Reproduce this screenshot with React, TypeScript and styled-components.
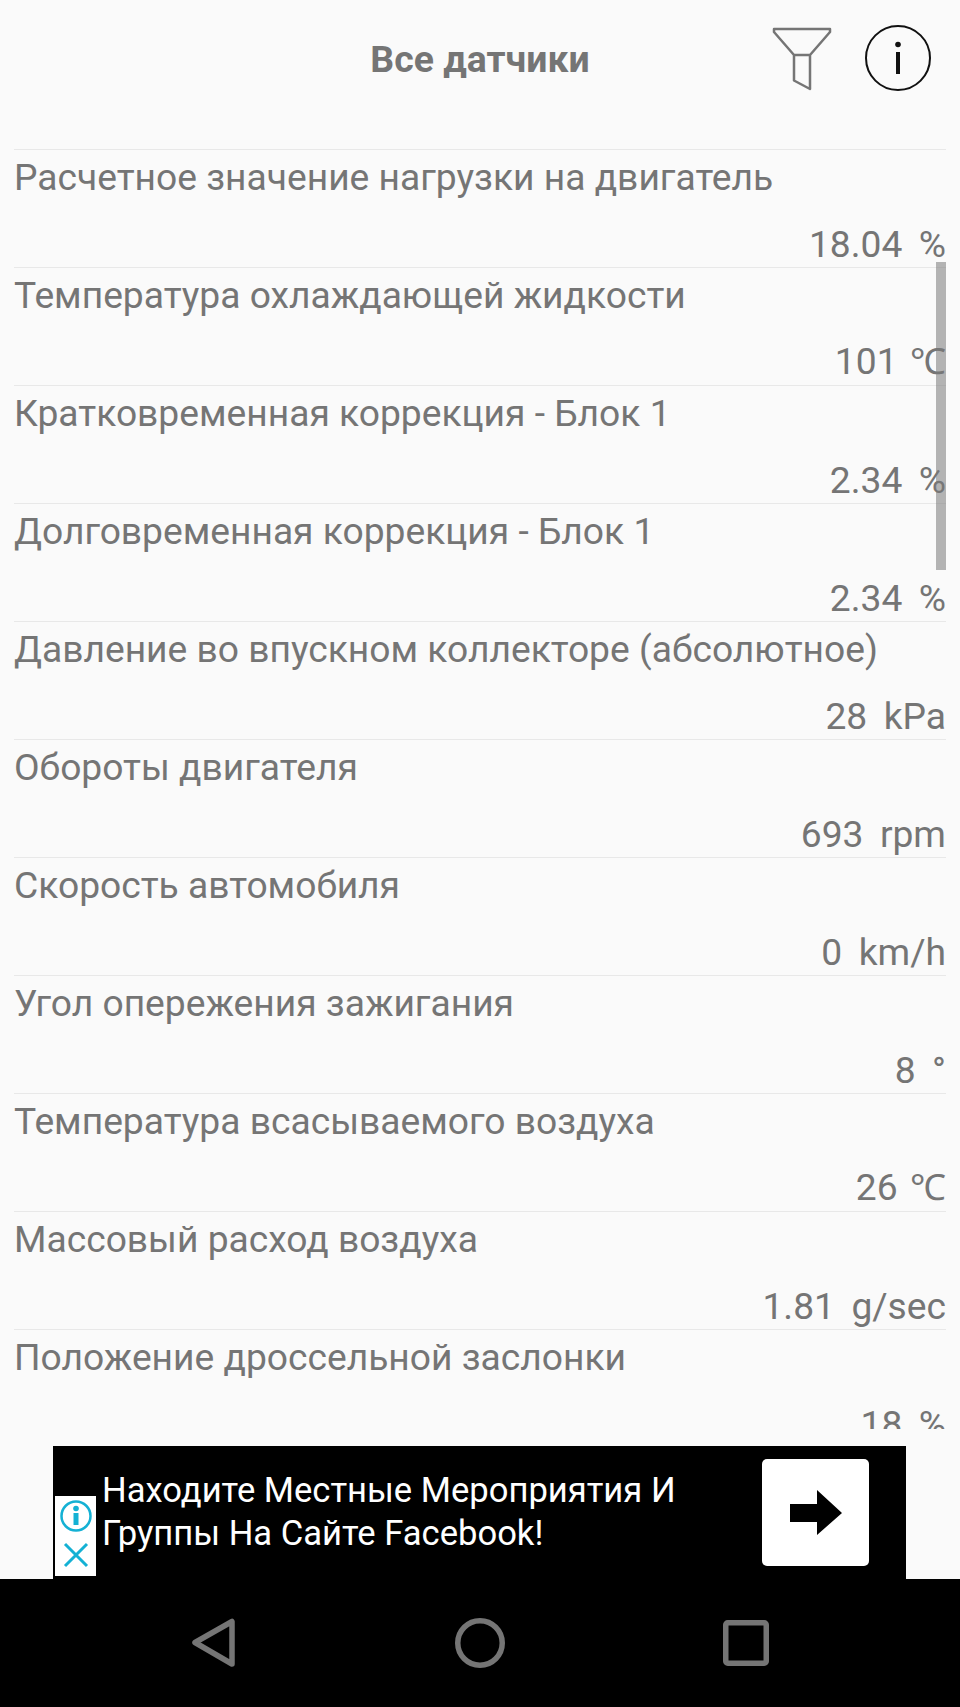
import React from "react";
import styled, { createGlobalStyle } from "styled-components";

const Global = createGlobalStyle`
  html, body { margin: 0; padding: 0; background: #fafafa; }
  #root { width: 960px; height: 1707px; }
`;

const Screen = styled.div`
  width: 960px;
  height: 1707px;
  display: flex;
  flex-direction: column;
  overflow: hidden;
  background: #fafafa;
  font-family: Roboto, "Liberation Sans", sans-serif;
`;

const Header = styled.header`
  height: 149px;
  flex: none;
  position: relative;
  display: flex;
  justify-content: center;
  padding-top: 37px;
  box-sizing: border-box;
`;

const Title = styled.h1`
  margin: 0;
  font-size: 37.400px;
  line-height: 44px;
  font-weight: 700;
  color: #757575;
`;

const HeaderIcons = styled.div`
  position: absolute;
  left: 772px;
  top: 25px;
  display: flex;
  align-items: flex-start;
  gap: 33px;
`;

const ListArea = styled.div`
  position: relative;
  height: 1280px;
  flex: none;
  overflow: hidden;
  padding: 0 14px;
`;

const Row = styled.div`
  height: 118px;
  box-sizing: border-box;
  border-top: 1px solid #e8e8e8;
  display: flex;
  flex-direction: column;
  justify-content: space-between;
  color: #757575;
  font-size: 37.200px;
  line-height: 46px;
`;

const Label = styled.div`
  padding-top: 4px;
  white-space: nowrap;
`;

const Value = styled.div`
  text-align: right;
  white-space: pre;
  word-spacing: -1px;
`;

const Unit = styled.span<{ $compact: boolean }>`
  font-size: ${(p) => (p.$compact ? "36px" : "inherit")};
  margin-left: ${(p) => (p.$compact ? "-4px" : "0")};
`;

const ScrollThumb = styled.div`
  position: absolute;
  left: 936px;
  top: 113px;
  width: 10px;
  height: 308px;
  background: rgba(120, 120, 120, 0.55);
`;

const Spacer = styled.div`
  height: 17px;
  flex: none;
`;

const Ad = styled.div`
  position: relative;
  flex: none;
  height: 133px;
  margin: 0 54px 0 53px;
  background: #000;
  display: flex;
  align-items: center;
  justify-content: space-between;
  padding: 0 37px 0 49px;
`;

const AdText = styled.div`
  color: #fff;
  font-size: 34.600px;
  line-height: 43px;
  margin-top: -1px;
`;

const AdChoices = styled.div`
  position: absolute;
  left: 2px;
  top: 50px;
  width: 41px;
  height: 80px;
  background: #fff;
  display: flex;
  flex-direction: column;
  align-items: center;
  padding-top: 4px;
  box-sizing: border-box;
  gap: 10px;
`;

const AdButton = styled.div`
  width: 107px;
  height: 107px;
  background: #fff;
  border-radius: 5px;
  display: flex;
  align-items: center;
  justify-content: center;
`;

const NavBar = styled.nav`
  flex: 1;
  background: #000;
  display: flex;
  justify-content: center;
  align-items: flex-start;
  padding-top: 39px;
  box-sizing: border-box;
`;

const NavSlot = styled.div`
  width: 266px;
  display: flex;
  justify-content: center;
`;

const rows = [
  ["Расчетное значение нагрузки на двигатель", "18.04", "%"],
  ["Температура охлаждающей жидкости", "101", "℃"],
  ["Кратковременная коррекция - Блок 1", "2.34", "%"],
  ["Долговременная коррекция - Блок 1", "2.34", "%"],
  ["Давление во впускном коллекторе (абсолютное)", "28", "kPa"],
  ["Обороты двигателя", "693", "rpm"],
  ["Скорость автомобиля", "0", "km/h"],
  ["Угол опережения зажигания", "8", "°"],
  ["Температура всасываемого воздуха", "26", "℃"],
  ["Массовый расход воздуха", "1.81", "g/sec"],
  ["Положение дроссельной заслонки", "18", "%"],
];

export default function App() {
  return (
    <Screen>
      <Global />
      <Header>
        <Title>Все датчики</Title>
        <HeaderIcons>
          <svg width="60" height="66" viewBox="0 0 60 66" fill="none">
            <path d="M2 4H58V7L38 30H22L2 7Z M22 30V55.500L38 64V30" stroke="#757575" strokeWidth="2.500" strokeLinejoin="round" />
          </svg>
          <svg width="66" height="66" viewBox="0 0 66 66" fill="none">
            <circle cx="33" cy="33" r="32" stroke="#111" strokeWidth="2" />
            <circle cx="33" cy="19.500" r="2.800" fill="#111" />
            <rect x="31" y="27" width="4" height="22" fill="#111" />
          </svg>
        </HeaderIcons>
      </Header>
      <ListArea>
        {rows.map(([label, number, unit]) => (
          <Row key={label}>
            <Label>{label}</Label>
            <Value>
              {number}
              {"  "}
              <Unit $compact={unit === "℃"}>{unit}</Unit>
            </Value>
          </Row>
        ))}
        <ScrollThumb />
      </ListArea>
      <Spacer />
      <Ad>
        <AdChoices>
          <svg width="32" height="32" viewBox="0 0 32 32" fill="none">
            <circle cx="16" cy="16" r="14.500" stroke="#14b1d4" strokeWidth="2.500" />
            <rect x="13.500" y="13" width="5" height="12" fill="#14b1d4" />
            <circle cx="16" cy="8.500" r="2.800" fill="#14b1d4" />
          </svg>
          <svg width="26" height="26" viewBox="0 0 26 26" fill="none">
            <path d="M2 2L24 24M24 2L2 24" stroke="#14b1d4" strokeWidth="3" />
          </svg>
        </AdChoices>
        <AdText>
          Находите Местные Мероприятия И
          <br />
          Группы На Сайте Facebook!
        </AdText>
        <AdButton>
          <svg width="52" height="46" viewBox="0 0 52 46">
            <path d="M0 14H27V0L52 23L27 45V32H0Z" fill="#000" />
          </svg>
        </AdButton>
      </Ad>
      <NavBar>
        <NavSlot>
          <svg width="44" height="50" viewBox="0 0 44 50" fill="none">
            <path d="M40 3.500V46L3 24.500Z" stroke="#757575" strokeWidth="5.500" strokeLinejoin="round" />
          </svg>
        </NavSlot>
        <NavSlot>
          <svg width="50" height="50" viewBox="0 0 50 50" fill="none">
            <circle cx="25" cy="25" r="22.250" stroke="#757575" strokeWidth="5.500" />
          </svg>
        </NavSlot>
        <NavSlot>
          <svg width="46" height="46" viewBox="0 0 46 46" fill="none" style={{ marginTop: 2 }}>
            <rect x="2.750" y="2.750" width="40.500" height="40.500" rx="2" stroke="#757575" strokeWidth="5.500" />
          </svg>
        </NavSlot>
      </NavBar>
    </Screen>
  );
}
